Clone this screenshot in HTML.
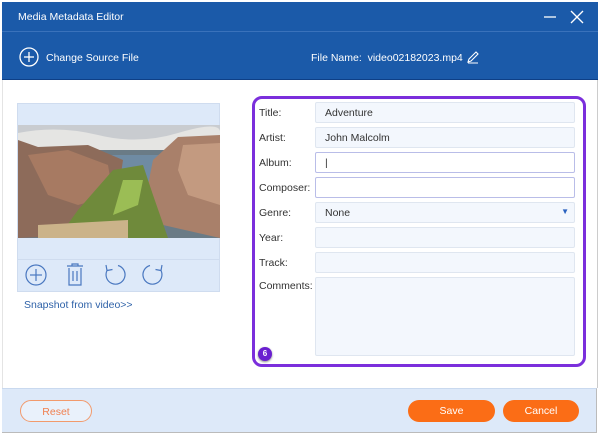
<!DOCTYPE html>
<html><head><style>
*{margin:0;padding:0;box-sizing:border-box}
body{width:600px;height:436px;background:#fff;font-family:"Liberation Sans",sans-serif;position:relative;overflow:hidden}
.win{position:absolute;left:0;top:0;width:600px;height:436px}
.title{position:absolute;left:2px;top:2px;width:596px;height:30px;background:#1b5aa9;border-bottom:1px solid #3a72bb;color:#fff;font-size:10.5px}
.tb{position:absolute;left:2px;top:32px;width:596px;height:48px;background:#1b5aa9;border-bottom:1px solid #0e3f86;color:#fff;font-size:10.5px}
.bottom{position:absolute;left:2px;top:388px;width:595px;height:45px;background:#dde9f9;border-top:1px solid #c9d9ef;border-bottom:1px solid #bbb;border-right:1px solid #bbb}
.lbl{position:absolute;left:259px;font-size:10.5px;color:#333}
.in{position:absolute;left:315px;width:260px;height:21px;background:#f3f7fd;border:1px solid #dfe6f0;border-radius:2px;font-size:10.5px;color:#333;padding:4px 0 0 9px}
.in.w{background:#fff;border-color:#b9bde8}
.btn{position:absolute;top:400px;height:22px;border-radius:11px;font-size:10.5px;text-align:center;line-height:22px}
</style></head><body>
<div class="win">
<div style="position:absolute;left:597px;top:80px;width:1px;height:308px;background:#ccc"></div>
<div style="position:absolute;left:2px;top:80px;width:1px;height:308px;background:#e4e4e4"></div>
<div class="title"><span style="position:absolute;left:16px;top:9px">Media Metadata Editor</span>
<svg style="position:absolute;left:538px;top:7px" width="50" height="16"><line x1="4" y1="8" x2="16" y2="8" stroke="#fff" stroke-width="1.3"/><line x1="31" y1="2" x2="43" y2="14" stroke="#fff" stroke-width="1.3"/><line x1="43" y1="2" x2="31" y2="14" stroke="#fff" stroke-width="1.3"/></svg></div>
<div class="tb">
<svg style="position:absolute;left:17px;top:15px" width="20" height="20"><circle cx="10" cy="10" r="9" fill="none" stroke="#fff" stroke-width="1.3"/><line x1="10" y1="5" x2="10" y2="15" stroke="#fff" stroke-width="1.3"/><line x1="5" y1="10" x2="15" y2="10" stroke="#fff" stroke-width="1.3"/></svg>
<span style="position:absolute;left:44px;top:20px">Change Source File</span>
<span style="position:absolute;left:309px;top:20px">File Name:&nbsp; video02182023.mp4</span>
<svg style="position:absolute;left:464px;top:18px" width="14" height="14"><path d="M2 12 L3 9 L10 2 L12 4 L5 11 Z M2 13 H12" fill="none" stroke="#fff" stroke-width="1.1"/></svg>
</div>
<div style="position:absolute;left:17px;top:103px;width:203px;height:189px;background:#dde9f9;border:1px solid #cfdcef"></div>
<svg style="position:absolute;left:18px;top:125px" width="202" height="113" viewBox="0 0 202 113">
<rect width="202" height="113" fill="#6a7b86"/>
<rect width="202" height="22" fill="#c9ccd0"/>
<path d="M0 8 Q40 0 80 10 T160 8 T202 6 V25 H0Z" fill="#e5e5e3"/>
<path d="M60 30 H150 V60 H60Z" fill="#6f8ba3"/>
<path d="M0 15 L20 22 L70 20 L105 35 L100 70 L70 110 L0 113Z" fill="#8d6b5a"/>
<path d="M10 30 L50 25 L90 40 L95 70 L60 80 L30 70Z" fill="#a77a62"/>
<path d="M202 10 L160 12 L135 35 L130 60 L145 100 L202 113Z" fill="#a9806a"/>
<path d="M165 20 L202 18 V80 L170 70 L160 45Z" fill="#c39a80"/>
<path d="M95 45 L125 40 L135 70 L150 113 L40 113 L60 85Z" fill="#6f8a3b"/>
<path d="M105 55 L125 55 L120 80 L95 90Z" fill="#9bbd55"/>
<path d="M20 100 L110 95 L110 113 L20 113Z" fill="#cbb38a"/>
</svg>
<div style="position:absolute;left:18px;top:259px;width:201px;height:1px;background:#cfdcef"></div>
<svg style="position:absolute;left:22px;top:262px" width="150" height="26" fill="none" stroke="#4a78c0" stroke-width="1.2">
<circle cx="14" cy="13" r="10"/><line x1="14" y1="7" x2="14" y2="19"/><line x1="8" y1="13" x2="20" y2="13"/>
<path d="M45 4 H61 M50 4 V2 H56 V4 M47 6 V23 H59 V6 M51 9 V19 M55 9 V19"/>
<path d="M96 3.5 A9.5 9.5 0 1 1 85 8.5 M84 3 L85 8.5 L90.5 7.5"/>
<path d="M128 3.5 A9.5 9.5 0 1 0 139 8.5 M140 3 L139 8.5 L133.5 7.5"/>
</svg>
<span style="position:absolute;left:24px;top:299px;font-size:10.5px;color:#2f62a8">Snapshot from video&gt;&gt;</span>
<div style="position:absolute;left:252px;top:96px;width:334px;height:271px;border:3px solid #7b2fdc;border-radius:10px"></div>
<div style="position:absolute;left:258px;top:347px;width:14px;height:14px;border-radius:7px;background:#6a1fd0;color:#fff;font-size:8px;font-weight:bold;text-align:center;line-height:14px;box-shadow:0 1px 2px #888">6</div>
<span class="lbl" style="top:107px">Title:</span><div class="in" style="top:102px">Adventure</div>
<span class="lbl" style="top:132px">Artist:</span><div class="in" style="top:127px">John Malcolm</div>
<span class="lbl" style="top:157px">Album:</span><div class="in w" style="top:152px">|</div>
<span class="lbl" style="top:182px">Composer:</span><div class="in w" style="top:177px"></div>
<span class="lbl" style="top:207px">Genre:</span><div class="in" style="top:202px">None<span style="position:absolute;right:5px;top:4px;color:#2a62c0;font-size:8px">▼</span></div>
<span class="lbl" style="top:232px">Year:</span><div class="in" style="top:227px"></div>
<span class="lbl" style="top:257px">Track:</span><div class="in" style="top:252px"></div>
<span class="lbl" style="top:280px">Comments:</span><div class="in" style="top:277px;height:79px"></div>
<div class="bottom"></div>
<div class="btn" style="left:20px;width:72px;border:1px solid #f29a6c;color:#f08050;background:#e9f1fb">Reset</div>
<div class="btn" style="left:408px;width:87px;background:#fb6d16;color:#fff">Save</div>
<div class="btn" style="left:503px;width:76px;background:#fb6d16;color:#fff">Cancel</div>
</div>
</body></html>
